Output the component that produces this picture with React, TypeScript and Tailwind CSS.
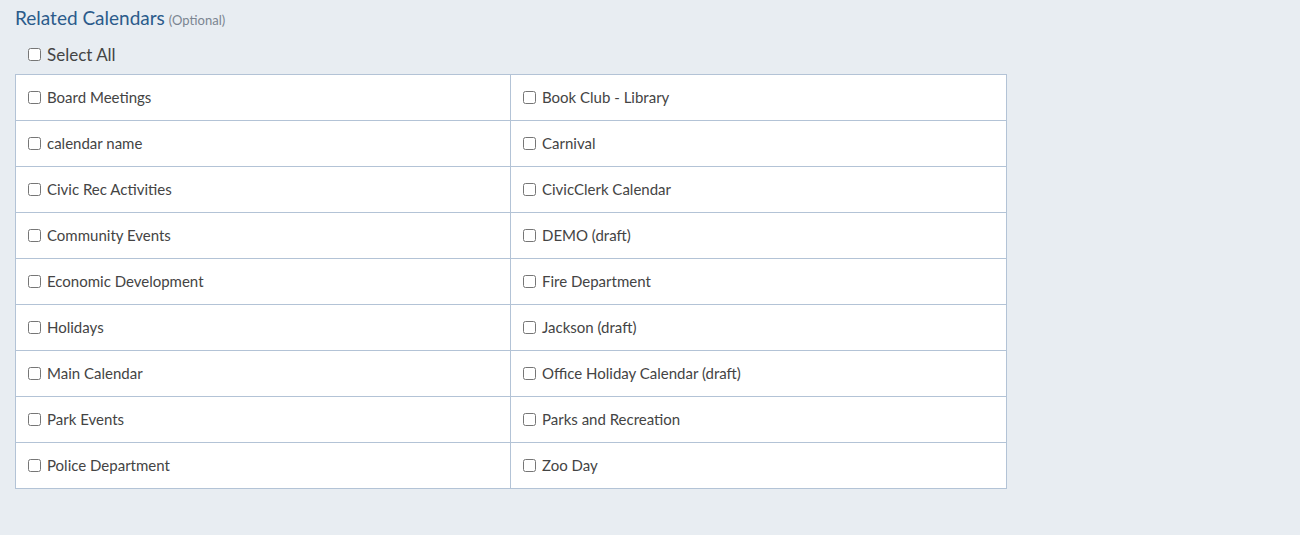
const calendars: [string, string][] = [
  ["Board Meetings", "Book Club - Library"],
  ["calendar name", "Carnival"],
  ["Civic Rec Activities", "CivicClerk Calendar"],
  ["Community Events", "DEMO (draft)"],
  ["Economic Development", "Fire Department"],
  ["Holidays", "Jackson (draft)"],
  ["Main Calendar", "Office Holiday Calendar (draft)"],
  ["Park Events", "Parks and Recreation"],
  ["Police Department", "Zoo Day"],
];

function CalendarCell({ name, last }: { name: string; last?: boolean }) {
  return (
    <label
      className={`flex h-[45px] items-center gap-[6px] pb-[1px] pl-[12px] ${
        last ? "" : "border-r border-[#b3c3d6]"
      }`}
    >
      <input type="checkbox" className="m-0 h-[13px] w-[13px]" />
      <span>{name}</span>
    </label>
  );
}

export default function App() {
  return (
    <div
      className="min-h-[535px] bg-[#e8edf2] px-[15px] pt-[4px] text-[15px] text-[#444]"
      style={{ fontFamily: "Lato, 'Noto Sans', sans-serif" }}
    >
      <div className="flex items-baseline gap-[4px]">
        <h2 className="text-[19px] text-[#2b5b8b]">Related Calendars</h2>
        <span className="text-[13px] text-[#7b8591]">(Optional)</span>
      </div>

      <label className="mt-[9px] flex items-center gap-[6px] pl-[13px] text-[17px]">
        <input type="checkbox" className="m-0 h-[13px] w-[13px]" />
        <span>Select All</span>
      </label>

      {/* Calendar grid */}
      <div className="mt-[7px] w-[992px] border border-[#b3c3d6] bg-white">
        {calendars.map(([left, right], i) => (
          <div
            key={left}
            className={`grid grid-cols-2 ${i > 0 ? "border-t border-[#b3c3d6]" : ""}`}
          >
            <CalendarCell name={left} />
            <CalendarCell name={right} last />
          </div>
        ))}
      </div>
    </div>
  );
}
